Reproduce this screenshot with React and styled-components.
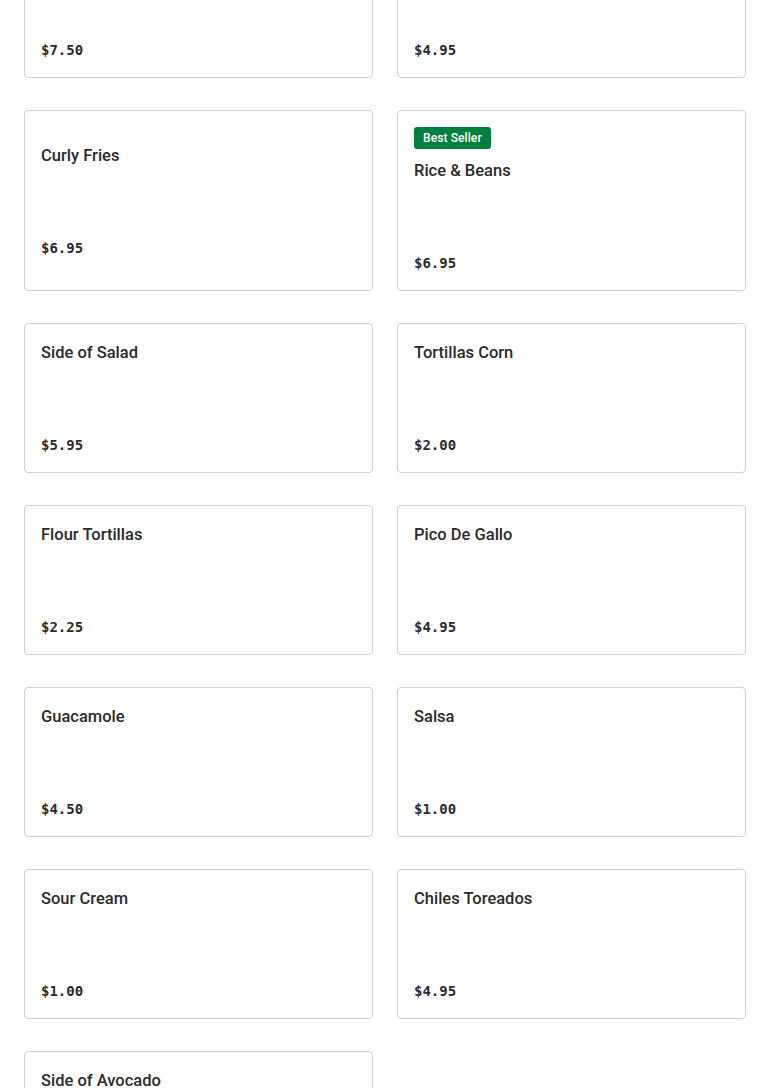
import React from "react";
import styled, { createGlobalStyle } from "styled-components";

const Global = createGlobalStyle`
  html, body { margin: 0; padding: 0; background: #ffffff; }
  body { font-family: Roboto, "Liberation Sans", Arial, sans-serif; color: #2b2b2b; overflow: hidden; }
  * { box-sizing: border-box; }
`;

const Page = styled.main`
  padding: 0 24px;
  margin-top: -72px;
`;

const Grid = styled.ul`
  list-style: none;
  margin: 0;
  padding: 0;
  display: grid;
  grid-template-columns: 1fr 1fr;
  column-gap: 24px;
  row-gap: 32px;
`;

const Card = styled.li`
  border: 1px solid #d1d1d1;
  border-radius: 4px;
  background: #fff;
  padding: 16px;
  display: flex;
  flex-direction: column;
  justify-content: center;
  min-height: 150px;
`;

const Badge = styled.span`
  align-self: flex-start;
  height: 22px;
  padding: 0 9px;
  margin-bottom: 9px;
  border-radius: 3px;
  background: #00813f;
  color: #ffffff;
  font-size: 12px;
  font-weight: 500;
  line-height: 22px;
  letter-spacing: 0.1px;
`;

const Title = styled.h3`
  margin: 1px 0 0;
  font-size: 16.5px;
  font-weight: 500;
  line-height: 24px;
  color: #2b2b2b;
`;

const Price = styled.span`
  margin-top: 70px;
  font-family: "DejaVu Sans Mono", "Liberation Mono", monospace;
  font-size: 14px;
  font-weight: 700;
  line-height: 21px;
  color: #2b2b2b;
`;

const items = [
  { name: "Chips & Salsa", price: "$7.50" },
  { name: "French Fries", price: "$4.95" },
  { name: "Curly Fries", price: "$6.95" },
  { name: "Rice & Beans", price: "$6.95", badge: "Best Seller" },
  { name: "Side of Salad", price: "$5.95" },
  { name: "Tortillas Corn", price: "$2.00" },
  { name: "Flour Tortillas", price: "$2.25" },
  { name: "Pico De Gallo", price: "$4.95" },
  { name: "Guacamole", price: "$4.50" },
  { name: "Salsa", price: "$1.00" },
  { name: "Sour Cream", price: "$1.00" },
  { name: "Chiles Toreados", price: "$4.95" },
  { name: "Side of Avocado", price: "$3.50" },
];

export default function App() {
  return (
    <>
      <Global />
      <Page>
        <Grid>
          {items.map((it) => (
            <Card key={it.name}>
              {it.badge && <Badge>{it.badge}</Badge>}
              <Title>{it.name}</Title>
              <Price>{it.price}</Price>
            </Card>
          ))}
        </Grid>
      </Page>
    </>
  );
}
